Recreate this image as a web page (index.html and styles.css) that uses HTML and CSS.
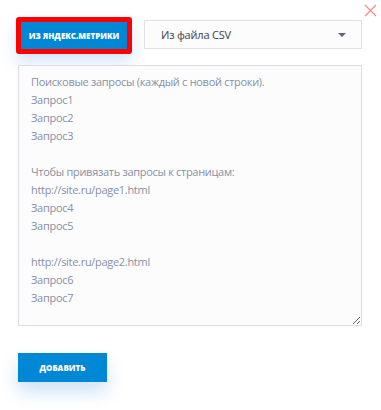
FILE: index.html
```html
<!DOCTYPE html>
<html lang="ru">
<head>
<meta charset="utf-8">
<title>Добавить запросы</title>
<link rel="stylesheet" href="styles.css">
</head>
<body>
<div class="page">
  <button class="close" aria-label="Закрыть">
    <svg width="13" height="13" viewBox="0 0 13 13"><path d="M1 1L12 12M12 1L1 12" stroke="#f28b8b" stroke-width="1.2" fill="none"/></svg>
  </button>
  <div class="top">
    <div class="hl"><button class="btn metrika">Из Яндекс.Метрики</button></div>
    <div class="select">
      <span class="select-text">Из файла CSV</span>
      <svg class="arrow" width="8" height="4" viewBox="0 0 8 4"><path d="M0 0H8L4 4Z" fill="#5b6579"/></svg>
    </div>
  </div>
  <textarea class="queries">Поисковые запросы (каждый с новой строки).
Запрос1
Запрос2
Запрос3

Чтобы привязать запросы к страницам:
http://site.ru/page1.html
Запрос4
Запрос5

http://site.ru/page2.html
Запрос6
Запрос7</textarea>
  <button class="btn add">Добавить</button>
</div>
</body>
</html>
```
FILE: styles.css
```css
html, body {
  margin: 0;
  padding: 0;
  background: #ffffff;
}
.page {
  position: relative;
  width: 381px;
  height: 410px;
  box-sizing: border-box;
  padding: 17px 19px 0 18px;
  display: flex;
  flex-direction: column;
  align-items: flex-start;
  font-family: "Open Sans", "Liberation Sans", sans-serif;
}
.close {
  position: absolute;
  top: 4px;
  right: 4px;
  border: 0;
  background: none;
  padding: 0;
  width: 13px;
  height: 13px;
  line-height: 0;
}
.top {
  display: flex;
  align-items: flex-start;
  width: 100%;
}
.hl {
  margin-left: -2px;
  padding: 5px;
  background: #ff0000;
  border-radius: 3px;
  box-shadow: 0 8px 16px rgba(0, 110, 210, 0.18);
  display: flex;
}
.btn {
  border: 0;
  background: #0088d6;
  color: #ffffff;
  font-family: "Open Sans", "Liberation Sans", sans-serif;
  font-weight: 800;
  font-size: 8px;
  text-transform: uppercase;
  letter-spacing: 0;
  padding: 0;
  cursor: pointer;
}
.metrika {
  width: 106px;
  height: 27px;
}
.select {
  margin-left: 12px;
  margin-top: 3px;
  flex: 1;
  height: 29px;
  box-sizing: border-box;
  border: 1px solid #dfe1e8;
  background: #fcfcfd;
  display: flex;
  align-items: center;
  justify-content: space-between;
  padding: 0 15px 0 16px;
}
.select-text {
  font-size: 11px;
  letter-spacing: -0.2px;
  color: #3a3f4a;
}
.arrow {
  display: block;
}
.queries {
  margin: 11px 0 0 0;
  width: 344px;
  height: 261px;
  box-sizing: border-box;
  border: 1px solid #dcdde6;
  background: #fcfcfd;
  padding: 7px 12px;
  font-family: "Open Sans", "Liberation Sans", sans-serif;
  font-size: 11px;
  letter-spacing: -0.3px;
  line-height: 18px;
  color: #8690a4;
  resize: both;
  outline: none;
}
.add {
  margin-top: 27px;
  width: 89px;
  height: 29px;
  box-shadow: 0 10px 18px rgba(0, 110, 210, 0.2);
}
```
